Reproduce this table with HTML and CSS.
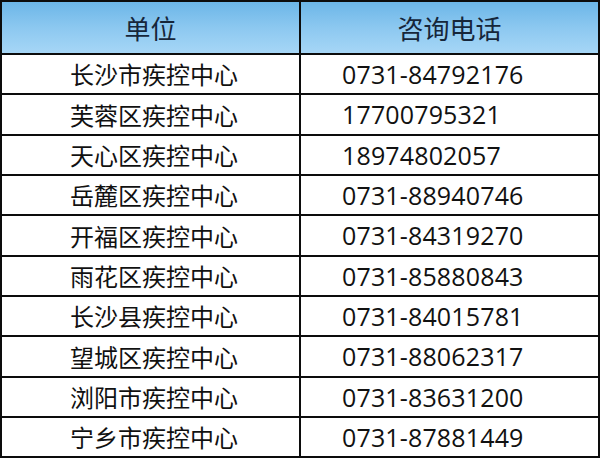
FILE: index.html
```html
<!DOCTYPE html>
<html lang="zh-CN">
<head>
<meta charset="utf-8">
<title>疾控中心咨询电话</title>
<link rel="stylesheet" href="styles.css">
</head>
<body>
<table class="phone-table">
  <thead>
    <tr><th class="col-unit">单位</th><th class="col-tel">咨询电话</th></tr>
  </thead>
  <tbody>
    <tr><td class="unit">长沙市疾控中心</td><td class="tel">0731-84792176</td></tr>
    <tr class="tall"><td class="unit">芙蓉区疾控中心</td><td class="tel">17700795321</td></tr>
    <tr><td class="unit">天心区疾控中心</td><td class="tel">18974802057</td></tr>
    <tr><td class="unit">岳麓区疾控中心</td><td class="tel">0731-88940746</td></tr>
    <tr class="tall"><td class="unit">开福区疾控中心</td><td class="tel">0731-84319270</td></tr>
    <tr><td class="unit">雨花区疾控中心</td><td class="tel">0731-85880843</td></tr>
    <tr><td class="unit">长沙县疾控中心</td><td class="tel">0731-84015781</td></tr>
    <tr class="tall"><td class="unit">望城区疾控中心</td><td class="tel">0731-88062317</td></tr>
    <tr><td class="unit">浏阳市疾控中心</td><td class="tel">0731-83631200</td></tr>
    <tr><td class="unit">宁乡市疾控中心</td><td class="tel">0731-87881449</td></tr>
  </tbody>
</table>
</body>
</html>
```
FILE: styles.css
```css
html, body {
  margin: 0;
  padding: 0;
  background: #ffffff;
}

.phone-table {
  width: 600px;
  border-collapse: collapse;
  table-layout: fixed;
  font-family: "Open Sans", "Noto Sans CJK SC", sans-serif;
  color: #111111;
}

.phone-table th,
.phone-table td {
  border: 2px solid #0c0c0c;
  padding: 0;
  white-space: nowrap;
}

.phone-table th {
  height: 51px;
  background: linear-gradient(to bottom, #6cb6e8 0%, #8cc8f0 50%, #a6d6f6 100%);
  font-family: "Noto Sans CJK SC", sans-serif;
  font-weight: normal;
  font-size: 26px;
  color: #16263a;
  text-align: center;
  line-height: 1;
}

.phone-table td {
  height: 38px;
  font-size: 24px;
  line-height: 1;
}

.phone-table tr.tall td {
  height: 39px;
}

.phone-table td.unit {
  font-family: "Noto Sans CJK SC", sans-serif;
  text-align: left;
  padding-left: 68px;
}

.phone-table td.tel {
  text-align: left;
  padding-left: 41px;
  font-size: 25px;
  letter-spacing: 0.15px;
}
```
